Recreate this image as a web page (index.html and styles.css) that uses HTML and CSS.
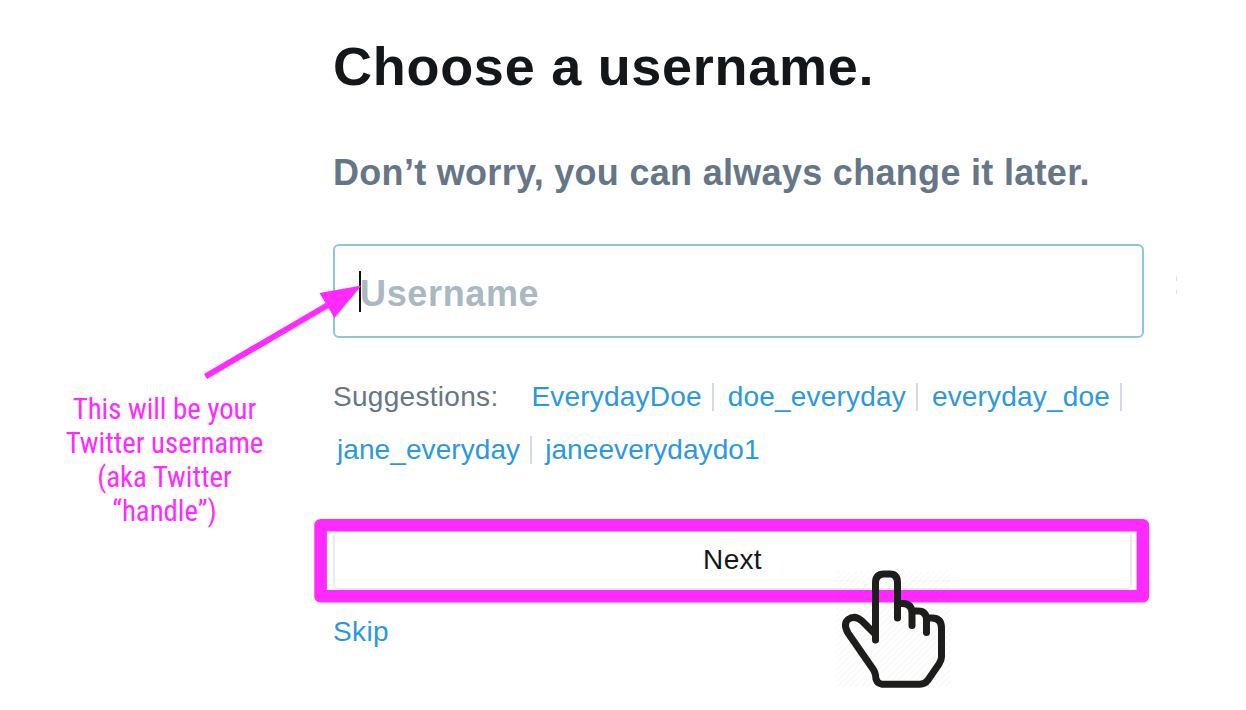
FILE: index.html
```html
<!DOCTYPE html>
<html lang="en">
<head>
<meta charset="utf-8">
<title>Choose a username</title>
<link rel="stylesheet" href="styles.css">
</head>
<body>
<main class="page">
  <aside class="note">This will be your<br>Twitter username<br>(aka Twitter<br>“handle”)</aside>
  <section class="form">
    <h1 class="title">Choose a username.</h1>
    <h2 class="subtitle">Don’t worry, you can always change it later.</h2>
    <div class="field"><span class="caret"></span><span class="placeholder">Username</span></div>
    <div class="suggestions">
      <div class="row"><span class="label">Suggestions:</span><a class="name">EverydayDoe</a><a class="name">doe_everyday</a><a class="name">everyday_doe</a></div>
      <div class="row row-second"><a class="name">jane_everyday</a><a class="name last">janeeverydaydo1</a></div>
    </div>
    <div class="next">Next</div>
    <a class="skip">Skip</a>
  </section>
  <svg class="overlay" width="1246" height="710" viewBox="0 0 1246 710">
    <defs><pattern id="hatch" width="6" height="6" patternUnits="userSpaceOnUse"><path d="M-1 1L1-1M0 6L6 0M5 7L7 5" stroke="#000" stroke-opacity=".022" stroke-width="1.4"/></pattern></defs>
    <path d="M205.5 376.5L328 305" stroke="#ff2aff" stroke-width="6"/>
    <path d="M361.500 285.500L319.500 293L334.500 318Z" fill="#ff2aff"/>
    <rect x="320.600" y="525.300" width="822.300" height="71" fill="none" stroke="#ff2aff" stroke-width="12.600" stroke-linejoin="round"/>
    <rect x="836" y="571" width="115" height="116" fill="url(#hatch)"/>
    <path d="M875.500 640V583Q875.500 574 884 574H890Q897.500 574 897.500 583V618M897.500 603.500H903Q912 604 912 613V625.500M912 611H918Q926.500 611 926.500 620V632.500M926.500 618H932Q941.500 618 941.500 628V657Q941.500 660 939 664L928 680Q925 684.200 920 684.200H882Q875.500 683.500 875.500 675Q875 672 873 669L848 633Q843 624 848 619.500Q855 614.500 862 621L874 633" fill="none" stroke="#1d1d1b" stroke-width="7" stroke-linecap="round" stroke-linejoin="round"/>
    <path d="M1176.500 276.500V281M1176.500 289.500V294" stroke="#fbd5d5" stroke-width="1"/>
  </svg>
</main>
</body>
</html>
```
FILE: styles.css
```css
body {
  margin: 0;
  background: #fff;
  font-family: "Liberation Sans", Arial, sans-serif;
}

.page {
  position: relative;
  display: flex;
  width: 1246px;
  height: 710px;
  overflow: hidden;
}

.note {
  width: 329px;
  padding: 392px 0 0;
  box-sizing: border-box;
  margin-right: 4px;
  font: 28.8px/34px "Roboto Condensed", Roboto, sans-serif;
  font-stretch: 75%;
  color: #ff2aff;
  text-align: center;
}

.form { width: 811px; }

.title {
  margin: 36px 0 0;
  font-size: 54px;
  line-height: 60px;
  letter-spacing: .73px;
  color: #14171a;
  white-space: nowrap;
}

.subtitle {
  margin: 57px 0 0;
  font-size: 36px;
  line-height: 40px;
  letter-spacing: .3px;
  color: #657786;
  white-space: nowrap;
}

.field {
  display: flex;
  align-items: center;
  box-sizing: border-box;
  height: 94px;
  margin-top: 51px;
  padding: 5px 0 0 24px;
  border: 2px solid #8fc5dc;
  border-radius: 6px;
}

.caret {
  width: 2px;
  height: 41px;
  margin-top: -4px;
  background: #111;
}

.placeholder {
  margin-left: -1px;
  font-size: 36px;
  font-weight: bold;
  letter-spacing: .65px;
  color: #aab8c2;
}

.suggestions { padding-top: 32px; }

.row {
  display: flex;
  align-items: center;
  height: 53px;
  font-size: 28px;
}

.row-second { padding-left: 4px; }

.label {
  margin-right: 33px;
  letter-spacing: .3px;
  color: #657786;
}

.name {
  margin-right: 14px;
  padding-right: 10px;
  border-right: 2px solid #d3dce2;
  line-height: 28px;
  letter-spacing: .19px;
  color: #2b98e0;
}

.row-second .name {
  margin-right: 13px;
  letter-spacing: .08px;
}

.row-second .last { border-right: 0; }

.next {
  box-sizing: border-box;
  width: 799px;
  height: 60px;
  margin-top: 54px;
  border: 2px solid #e6ecf0;
  border-radius: 6px;
  font-size: 28px;
  line-height: 56px;
  letter-spacing: .3px;
  text-align: center;
  color: #14171a;
}

.skip {
  display: block;
  margin-top: 25px;
  font-size: 28px;
  line-height: 34px;
  letter-spacing: .4px;
  color: #2b98e0;
}

.overlay {
  position: absolute;
  top: 0;
  left: 0;
}
```
